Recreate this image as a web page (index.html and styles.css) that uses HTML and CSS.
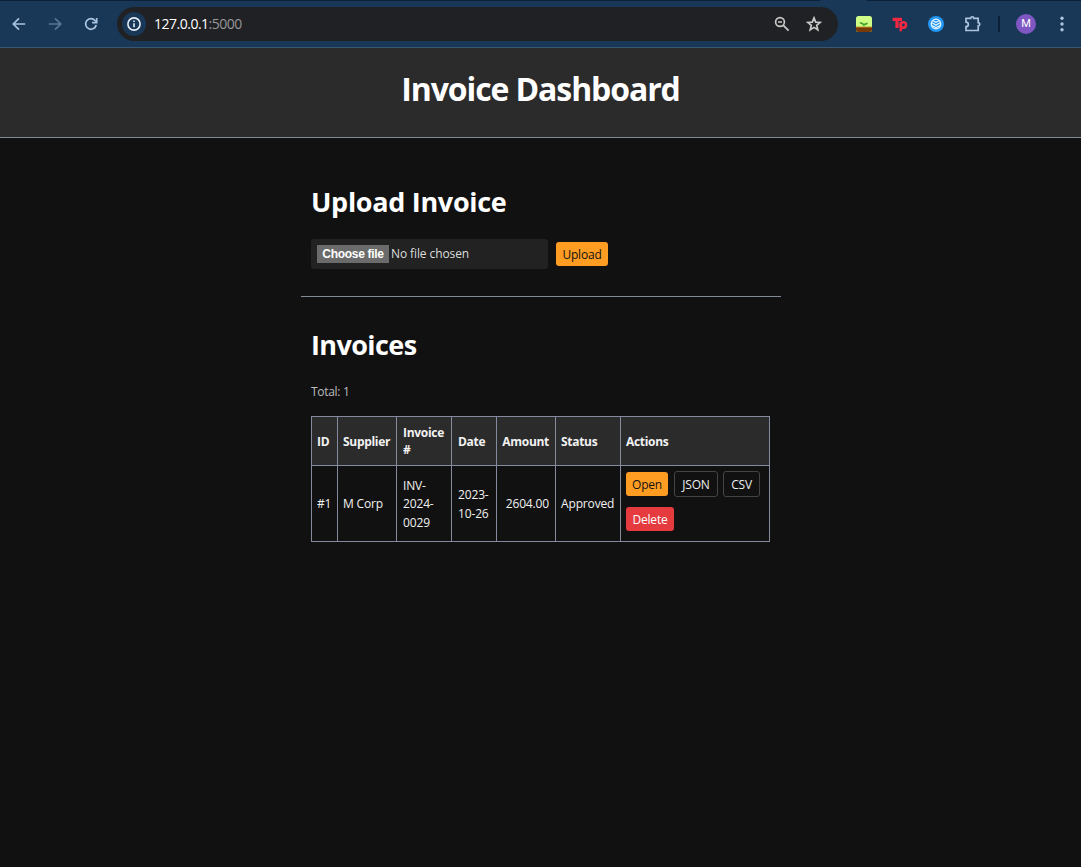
FILE: index.html
```html
<!DOCTYPE html>
<html lang="en">
<head>
<meta charset="utf-8">
<title>Invoice Dashboard</title>
<link rel="stylesheet" href="styles.css">
</head>
<body>
<div class="browser">
  <div class="tab-edge"><span class="active-tab"></span></div>
  <div class="toolbar">
    <svg class="icon back" viewBox="0 0 16 16"><path d="M14.2 8H2.5M8 2.3 2.3 8 8 13.7"/></svg>
    <svg class="icon forward" viewBox="0 0 16 16"><path d="M1.8 8h11.7M8 2.3 13.7 8 8 13.7"/></svg>
    <svg class="icon reload" viewBox="0 0 16 16"><path d="M13.2 8.8A5.3 5.3 0 1 1 12 4.5L13.5 6"/><path d="M13.7 2v4.6H9.1"/></svg>
    <div class="address">
      <span class="info"><svg viewBox="0 0 16 16"><circle cx="8" cy="8" r="6.1"/><path d="M8 7.2v4M8 4.5v1.5"/></svg></span>
      <span class="url">127.0.0.1<span class="port">:5000</span></span>
      <svg class="icon magnify" viewBox="0 0 16 16"><circle cx="6" cy="6" r="4.4"/><path d="M9.3 9.3 14.6 14.6M4 6h4"/></svg>
      <svg class="icon star" viewBox="0 0 16 16"><path d="m8 1.9 1.7 4.2 4.5.3-3.5 2.9 1.1 4.5L8 11.4l-3.8 2.4 1.1-4.5-3.5-2.9 4.5-.3z"/></svg>
    </div>
    <svg class="ext sprout" viewBox="0 0 16 16"><rect width="16" height="16" rx="2.5" fill="#cfff87"/><path d="M0 11h16v2.5a2.5 2.5 0 0 1-2.5 2.5h-11A2.5 2.5 0 0 1 0 13.5z" fill="#793a09"/><path d="M0 10.7h16v1.2H0z" fill="#a36612"/><path d="M7.700 10.500C7.500 8.800 6 8.800 4.300 7.800L3.300 6.300C5.500 6 7.300 6.700 8 8 8.700 7 10.200 6.500 12 6.700 11.500 8.500 10 9.200 8.500 9.200V10.500z" fill="#45a526"/></svg>
    <svg class="ext tp" viewBox="0 0 16 16"><path d="M.6 3.300h9.400M5 3.200v8.800" stroke-width="3.200"/><path d="M8.800 15.300V6.500"/><circle cx="11.300" cy="9" r="2.700"/></svg>
    <svg class="ext globe" viewBox="0 0 16 16"><circle cx="8" cy="8" r="8" fill="#2196f3"/><g fill="none" stroke="#e7f6ff" stroke-width="1.200"><circle cx="8" cy="8" r="4.800"/><path d="M3.400 6.500 8 9l4.600-2.500M3.800 9.500 8 11.500l4.200-2M5 4.800 8 6.300l3-1.500"/></g></svg>
    <svg class="icon puzzle" viewBox="0 0 18 18"><path d="M2 3.300h4.700a1.500 1.500 0 0 1 3.100 0h4.400v4.400a1.500 1.500 0 0 1 0 3.100v4.700H2v-3.800a2.300 2.300 0 0 0 0-4.600z"/></svg>
    <span class="divider"></span>
    <span class="avatar">M</span>
    <svg class="menu" viewBox="0 0 4 16"><circle cx="2" cy="2.200" r="1.700"/><circle cx="2" cy="8" r="1.700"/><circle cx="2" cy="13.800" r="1.700"/></svg>
  </div>
</div>
<header class="page-header"><h1>Invoice Dashboard</h1></header>
<main class="content">
  <section class="upload">
    <h2 class="upload-title">Upload Invoice</h2>
    <div class="upload-form">
      <div class="file-input"><button class="choose">Choose file</button><span class="file-name">No file chosen</span></div>
      <button class="btn primary upload-btn">Upload</button>
    </div>
  </section>
  <section class="invoices">
    <h2 class="invoices-title">Invoices</h2>
    <p class="total">Total: 1</p>
    <table>
      <colgroup><col class="c-id"><col class="c-supplier"><col class="c-invoice"><col class="c-date"><col class="c-amount"><col class="c-status"><col class="c-actions"></colgroup>
      <thead><tr><th>ID</th><th>Supplier</th><th class="inset">Invoice<br>#</th><th class="inset">Date</th><th class="amount">Amount</th><th>Status</th><th>Actions</th></tr></thead>
      <tbody><tr>
        <td>#1</td><td>M Corp</td><td class="inset">INV-<br>2024-<br>0029</td><td class="inset">2023-<br>10-26</td><td class="amount">2604.00</td><td>Approved</td>
        <td class="actions-cell"><div class="actions">
          <button class="btn primary open">Open</button><button class="btn outline json">JSON</button><button class="btn outline csv">CSV</button><button class="btn danger">Delete</button>
        </div></td>
      </tr></tbody>
    </table>
  </section>
</main>
</body>
</html>
```
FILE: styles.css
```css
* { box-sizing: border-box; }
body { margin: 0; min-height: 867px; background: #111; color: #f2f2f2; font-family: "Open Sans", "Noto Sans", sans-serif; font-size: 12px; }
button { font: inherit; padding: 0; margin: 0; border: 0; }
svg { display: block; flex: none; }

.browser { height: 48px; background: #193857; border-bottom: 1px solid #3c5871; }
.tab-edge { height: 1px; background: #0b213a; padding-left: 820px; }
.active-tab { display: block; width: 47px; height: 1px; background: #193857; }
.toolbar { height: 46px; display: flex; align-items: center; padding-left: 11px; }
.icon { width: 16px; height: 16px; fill: none; stroke: #abc4df; stroke-width: 1.7; }
.forward { margin-left: 20px; stroke: #587798; }
.reload { margin-left: 20px; }
.address { width: 721px; height: 34px; margin-left: 18px; border-radius: 17px; background: #202124; display: flex; align-items: center; padding-left: 5px; flex: none; }
.info { width: 24px; height: 24px; border-radius: 50%; background: #193857; display: grid; place-items: center; }
.info svg { width: 16px; height: 16px; fill: none; stroke: #e6edf5; stroke-width: 1.6; }
.url { width: 620px; margin-left: 8px; color: #fff; font-size: 14px; letter-spacing: -.5px; line-height: 20px; }
.port { color: #969799; }
.address .icon { stroke: #c7c7c7; }
.star { margin-left: 16px; }
.ext { width: 16px; height: 16px; margin-left: 20px; }
.sprout { margin-left: 18px; }
.tp { fill: none; stroke: #f32843; stroke-width: 2.5; }
.puzzle { width: 18px; height: 18px; margin-left: 20px; }
.divider { width: 2px; height: 16px; margin-left: 16px; background: #0b213a; }
.avatar { width: 20px; height: 20px; border-radius: 50%; margin-left: 16px; background: #7e57c2; color: #fff; font: 11px/20px Roboto, sans-serif; text-align: center; }
.menu { width: 4px; height: 16px; margin-left: 24px; fill: #abc4df; }

.page-header { height: 90px; background: #2b2b2b; border-bottom: 1px solid #838b92; text-align: center; }
h1, h2 { margin: 0; color: #fff; font-weight: 700; white-space: nowrap; }
h1 { padding-top: 19px; font-size: 32px; line-height: 44px; letter-spacing: -1.1px; }
.content { width: 480px; margin-left: 301px; }
.upload { height: 159px; padding: 45px 10px 0; border-bottom: 1px solid #838b98; }
h2 { font-size: 27px; line-height: 38px; letter-spacing: -.6px; }
.upload-title { letter-spacing: -.3px; }
.upload-form { display: flex; margin-top: 18px; }
.file-input { width: 237px; height: 30px; padding: 6px; background: #222; border-radius: 3px; display: flex; }
.choose { width: 72px; height: 18px; background: #6b6b6b; color: #fff; font: bold 12px/18px "Liberation Sans", sans-serif; letter-spacing: -.3px; white-space: nowrap; }
.file-name { margin-left: 2px; line-height: 18px; letter-spacing: -.1px; color: #ddd; }
.btn { border-radius: 3px; height: 24px; line-height: 24px; text-align: center; white-space: nowrap; letter-spacing: -.2px; }
.primary { background: #ff9d23; color: #111; }
.danger { width: 48px; background: #e53b3f; color: #fff; }
.outline { height: 26px; border: 1px solid #444; background: #111; color: #eee; }
.upload-btn { width: 52px; margin: 3px 0 0 8px; padding-top: 1px; }
.invoices { padding: 29px 10px 0; }
.total { margin: 19px 0 15px; line-height: 18px; color: #bbb; letter-spacing: -.3px; }

table { width: 459px; table-layout: fixed; border-collapse: collapse; }
.c-id { width: 26px; } .c-supplier { width: 59px; } .c-invoice { width: 55px; } .c-date { width: 45px; }
.c-amount { width: 59px; } .c-status { width: 65px; } .c-actions { width: 149px; }
th, td { border: 1px solid #858a9f; padding: 0 0 0 5px; text-align: left; vertical-align: middle; white-space: nowrap; letter-spacing: -.15px; }
th { height: 49px; background: #2b2b2b; line-height: 17px; letter-spacing: -.3px; }
td { height: 76px; padding-top: 2px; line-height: 18.5px; }
.inset { padding-left: 6px; }
.amount { padding-left: 0; padding-right: 6px; text-align: right; }
.actions-cell { padding-top: 0; }
.actions { height: 65px; display: flex; flex-wrap: wrap; align-items: center; align-content: flex-start; row-gap: 10px; }
.actions .btn { padding-top: 1px; }
.open { width: 42px; }
.json { width: 44px; margin-left: 6px; }
.csv { width: 37px; margin-left: 5px; }
```
